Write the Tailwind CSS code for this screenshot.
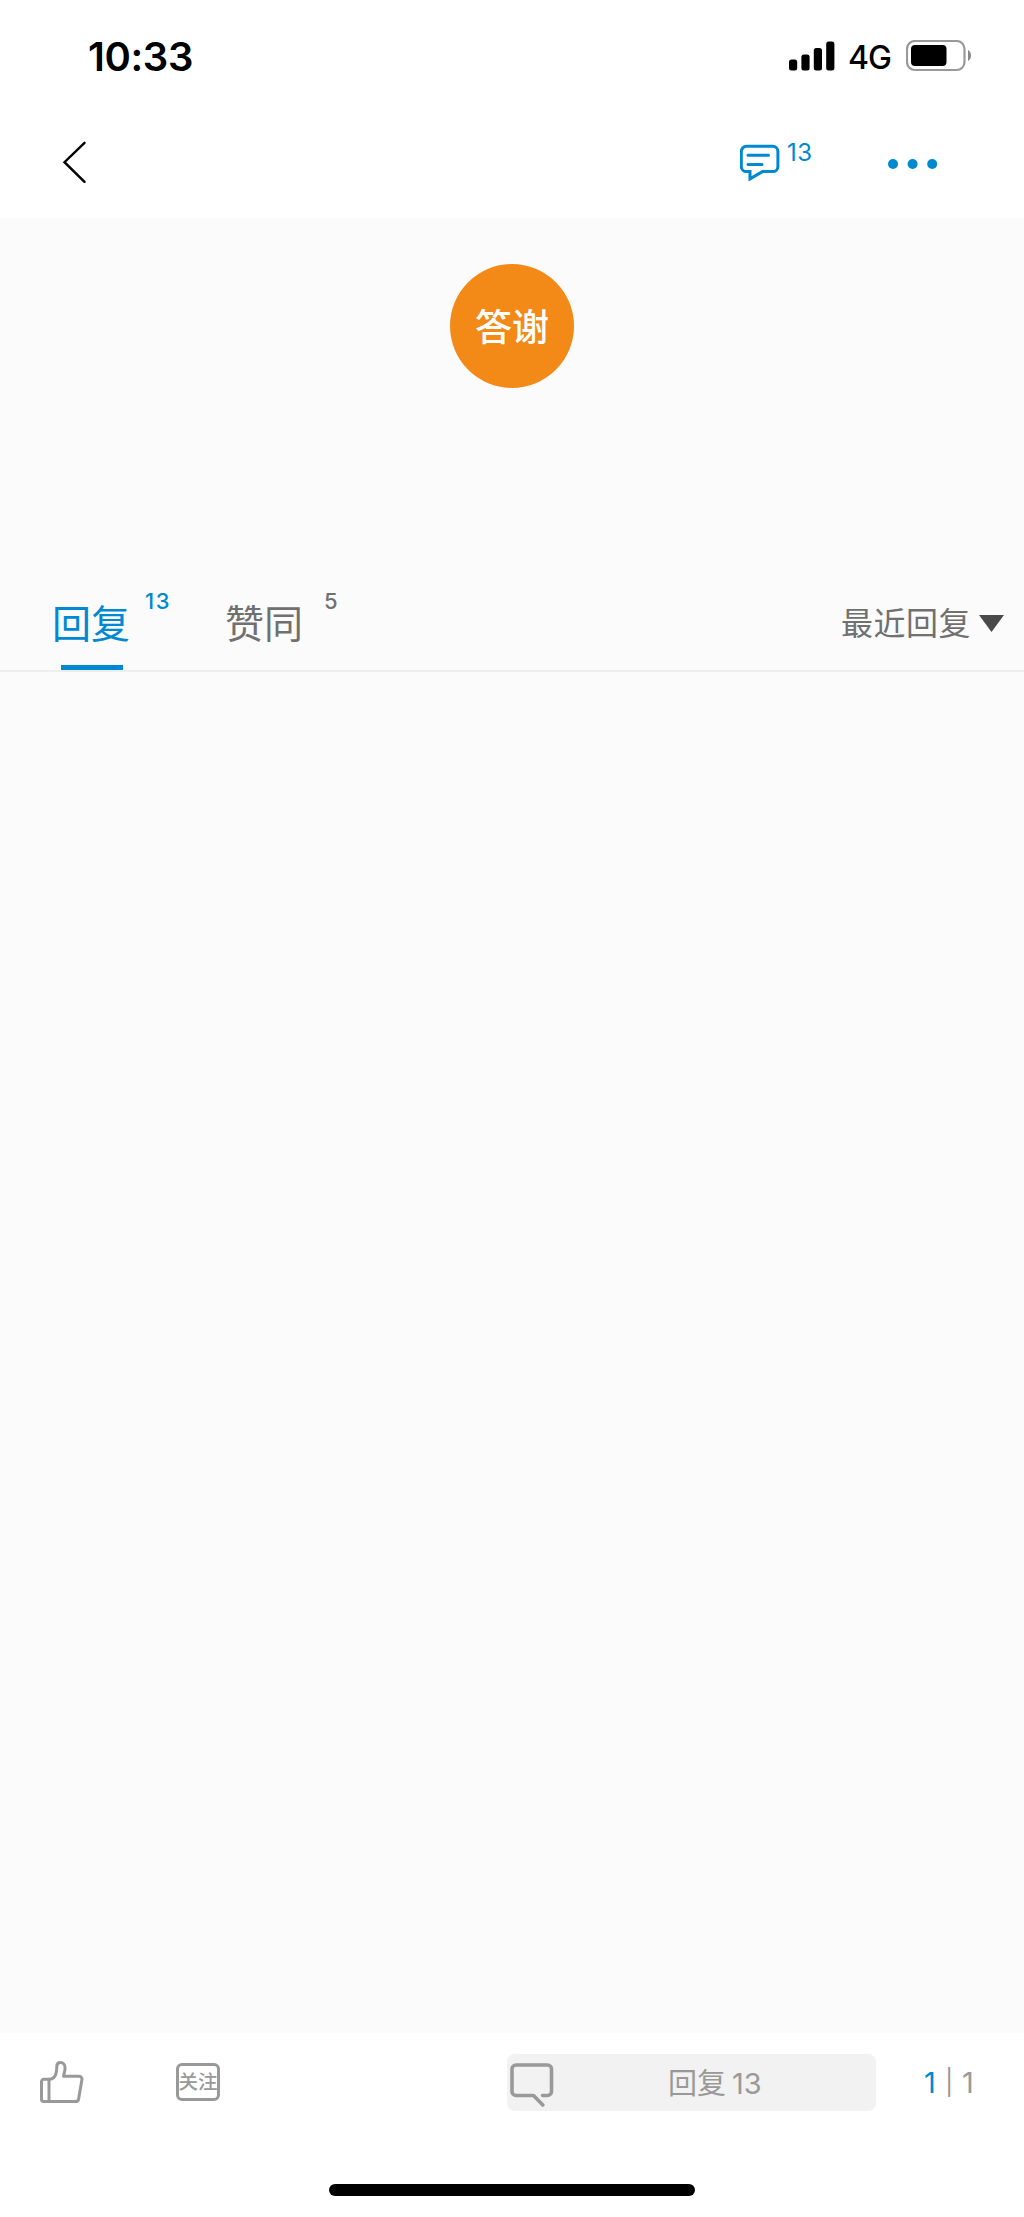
<!DOCTYPE html>
<html lang="zh-CN">
<head>
  <meta charset="UTF-8" />
  <meta name="viewport" content="width=device-width, initial-scale=1.0"/>
  <title>回复</title>
  <script src="https://cdn.jsdelivr.net/npm/@tailwindcss/browser@4"></script>
  <style>
    body {
      font-family: 'Inter', 'Noto Sans CJK SC', sans-serif;
    }
  </style>
</head>
<body class="bg-[#fbfbfb] text-[#707070] w-[1024px] h-[2217px] flex flex-col overflow-hidden">

  <!-- Status bar -->
  <div class="bg-white h-[112px] pl-[88px] pr-[52px] flex items-center justify-between text-black shrink-0">
    <span class="text-[40px] leading-none font-semibold tracking-[-0.4px] pt-px">10:33</span>
    <div class="flex items-center">
      <svg class="w-[46px] h-[30px] mr-[13px]" viewBox="0 0 46 30">
        <rect x="0" y="18.5" width="8.2" height="11" rx="2.5"/>
        <rect x="12.4" y="13.5" width="8.2" height="16" rx="2.5"/>
        <rect x="24.8" y="7" width="8.2" height="22.5" rx="2.5"/>
        <rect x="37.2" y="0.5" width="8.2" height="29" rx="2.5"/>
      </svg>
      <span class="text-[32px] leading-none font-medium tracking-[-1px] w-[58px] pt-[3px]">4G</span>
      <svg class="w-[66px] h-[32px]" viewBox="0 0 66 32">
        <rect x="1" y="1" width="57.5" height="29" rx="8" fill="none" stroke="#999" stroke-width="2.2"/>
        <rect x="5" y="5" width="35.5" height="21" rx="4"/>
        <path d="M62 10c4 2 4 9 0 11z" fill="#888"/>
      </svg>
    </div>
  </div>

  <!-- Nav -->
  <header class="bg-white h-[106px] pl-[62px] pr-[86px] flex justify-between text-[#0089d0] shrink-0">
    <svg class="w-6 h-[42px] mt-[29px]" viewBox="0 0 24 42" fill="none" stroke="#000" stroke-width="2.4" stroke-linecap="round">
      <path d="M22.5 1.8L2.5 21.2L22.5 40.8"/>
    </svg>
    <div class="flex">
      <svg class="w-10 h-10 mt-8" viewBox="0 0 40 40" fill="none" stroke="currentColor" stroke-width="3">
        <path d="M10 27.6H6.5a5.2 5.2 0 0 1-5.2-5.2V7.5a5.2 5.2 0 0 1 5.2-5.2h26.2a5.2 5.2 0 0 1 5.2 5.2v14.9a5.2 5.2 0 0 1-5.2 5.2H22.500L10 34.800z"/>
        <path d="M8 11.3h20.5M8 20.600h14" stroke-linecap="round"/>
      </svg>
      <span class="text-2xl leading-none tracking-[0.5px] mt-[29px] ml-[7px] w-[101px]">13</span>
      <svg class="w-[50px] h-[10px] mt-[47px]" viewBox="0 0 50 10" fill="currentColor">
        <circle cx="5" cy="5" r="5"/>
        <circle cx="24.6" cy="5" r="5"/>
        <circle cx="44.2" cy="5" r="5"/>
      </svg>
    </div>
  </header>

  <!-- Thanks button -->
  <section class="h-[352px] pt-[46px] flex justify-center shrink-0">
    <button class="w-[124px] h-[124px] rounded-full bg-[#f38a18] text-white text-[37px] leading-none font-medium pt-[2px]">答谢</button>
  </section>

  <!-- Tabs -->
  <div class="h-[102px] pl-[52px] pr-5 flex justify-between border-b-2 border-[#eee] shrink-0">
    <div class="flex">
      <div class="flex text-[#0089d0] w-[173px]">
        <div class="flex flex-col items-center justify-between">
          <span class="text-[39px] leading-none mt-[34px]">回复</span>
          <div class="w-[62px] h-[5px] bg-[#0089d0] ml-px"></div>
        </div>
        <span class="text-[22px] leading-none font-medium tracking-[1.5px] mt-5 ml-[15px]">13</span>
      </div>
      <div class="flex">
        <span class="text-[39px] leading-none mt-[34px]">赞同</span>
        <span class="text-[22px] leading-none font-medium mt-5 ml-[21px]">5</span>
      </div>
    </div>
    <div class="flex">
      <span class="text-[32px] leading-none mt-[38px] tracking-[0.5px]">最近回复</span>
      <svg class="w-[25px] h-[17px] mt-[45px] ml-2" viewBox="0 0 25 17" fill="#4a4a4a">
        <path d="M0 0h25L12.5 17z"/>
      </svg>
    </div>
  </div>

  <!-- Empty list -->
  <main class="flex-1"></main>

  <!-- Bottom bar -->
  <footer class="bg-white h-[184px] text-[#999] flex flex-col items-center shrink-0">
    <div class="w-full h-[99px] pl-10 pt-[21px] flex items-start">
      <svg class="w-11 h-[42px] mt-[7px]" viewBox="0 0 44 42" fill="none" stroke="currentColor" stroke-width="3" stroke-linejoin="round">
        <path d="M9 18.3H3.8a2.3 2.3 0 0 0-2.3 2.3v17.6a2.3 2.3 0 0 0 2.3 2.3H35.5c1.8 0 2.8-.9 3.1-2.4l3.3-19.3c.3-2-.8-3.5-2.6-3.5H23.5c.6-3 1.6-5.500 1.600-8.300 0-3.400-2-5.500-4.800-5.500-2.500 0-3.500 1.700-3.500 4 0 5.500-.8 12.800-7.800 12.800z"/>
        <path d="M9 18.3v22.200"/>
      </svg>
      <div class="w-11 h-[38px] mt-[9px] ml-[92px] border-3 border-[#999] rounded-md flex items-center justify-center text-[19.5px] leading-none font-medium whitespace-nowrap pt-[2px]">关注</div>
      <div class="w-[369px] h-[57px] ml-[287px] bg-[#f2f2f2] rounded-lg flex items-start">
        <svg class="w-11 h-[45px] mt-2 ml-[3px]" viewBox="0 0 44 45" fill="none" stroke="currentColor" stroke-width="3.6" stroke-linecap="round" stroke-linejoin="round">
          <path d="M32.5 33.5H37.5a4 4 0 0 0 4-4V7a4 4 0 0 0-4-4H6a4 4 0 0 0-4 4v22.5a4 4 0 0 0 4 4H23.5l9.300 9.500"/>
        </svg>
        <span class="text-[29px] leading-none mt-[15px] ml-[114px] whitespace-nowrap">回复<span class="ml-[6px]">13</span></span>
      </div>
      <div class="flex items-center text-[29px] leading-none mt-[14px] ml-[48px]">
        <span class="text-[#0089d0] w-[20px]">1</span>
        <span class="w-[18px] text-[25px] pl-px">|</span>
        <span>1</span>
      </div>
    </div>
    <div class="w-[366px] h-3 mt-[52px] bg-black rounded-full"></div>
  </footer>

</body>
</html>
